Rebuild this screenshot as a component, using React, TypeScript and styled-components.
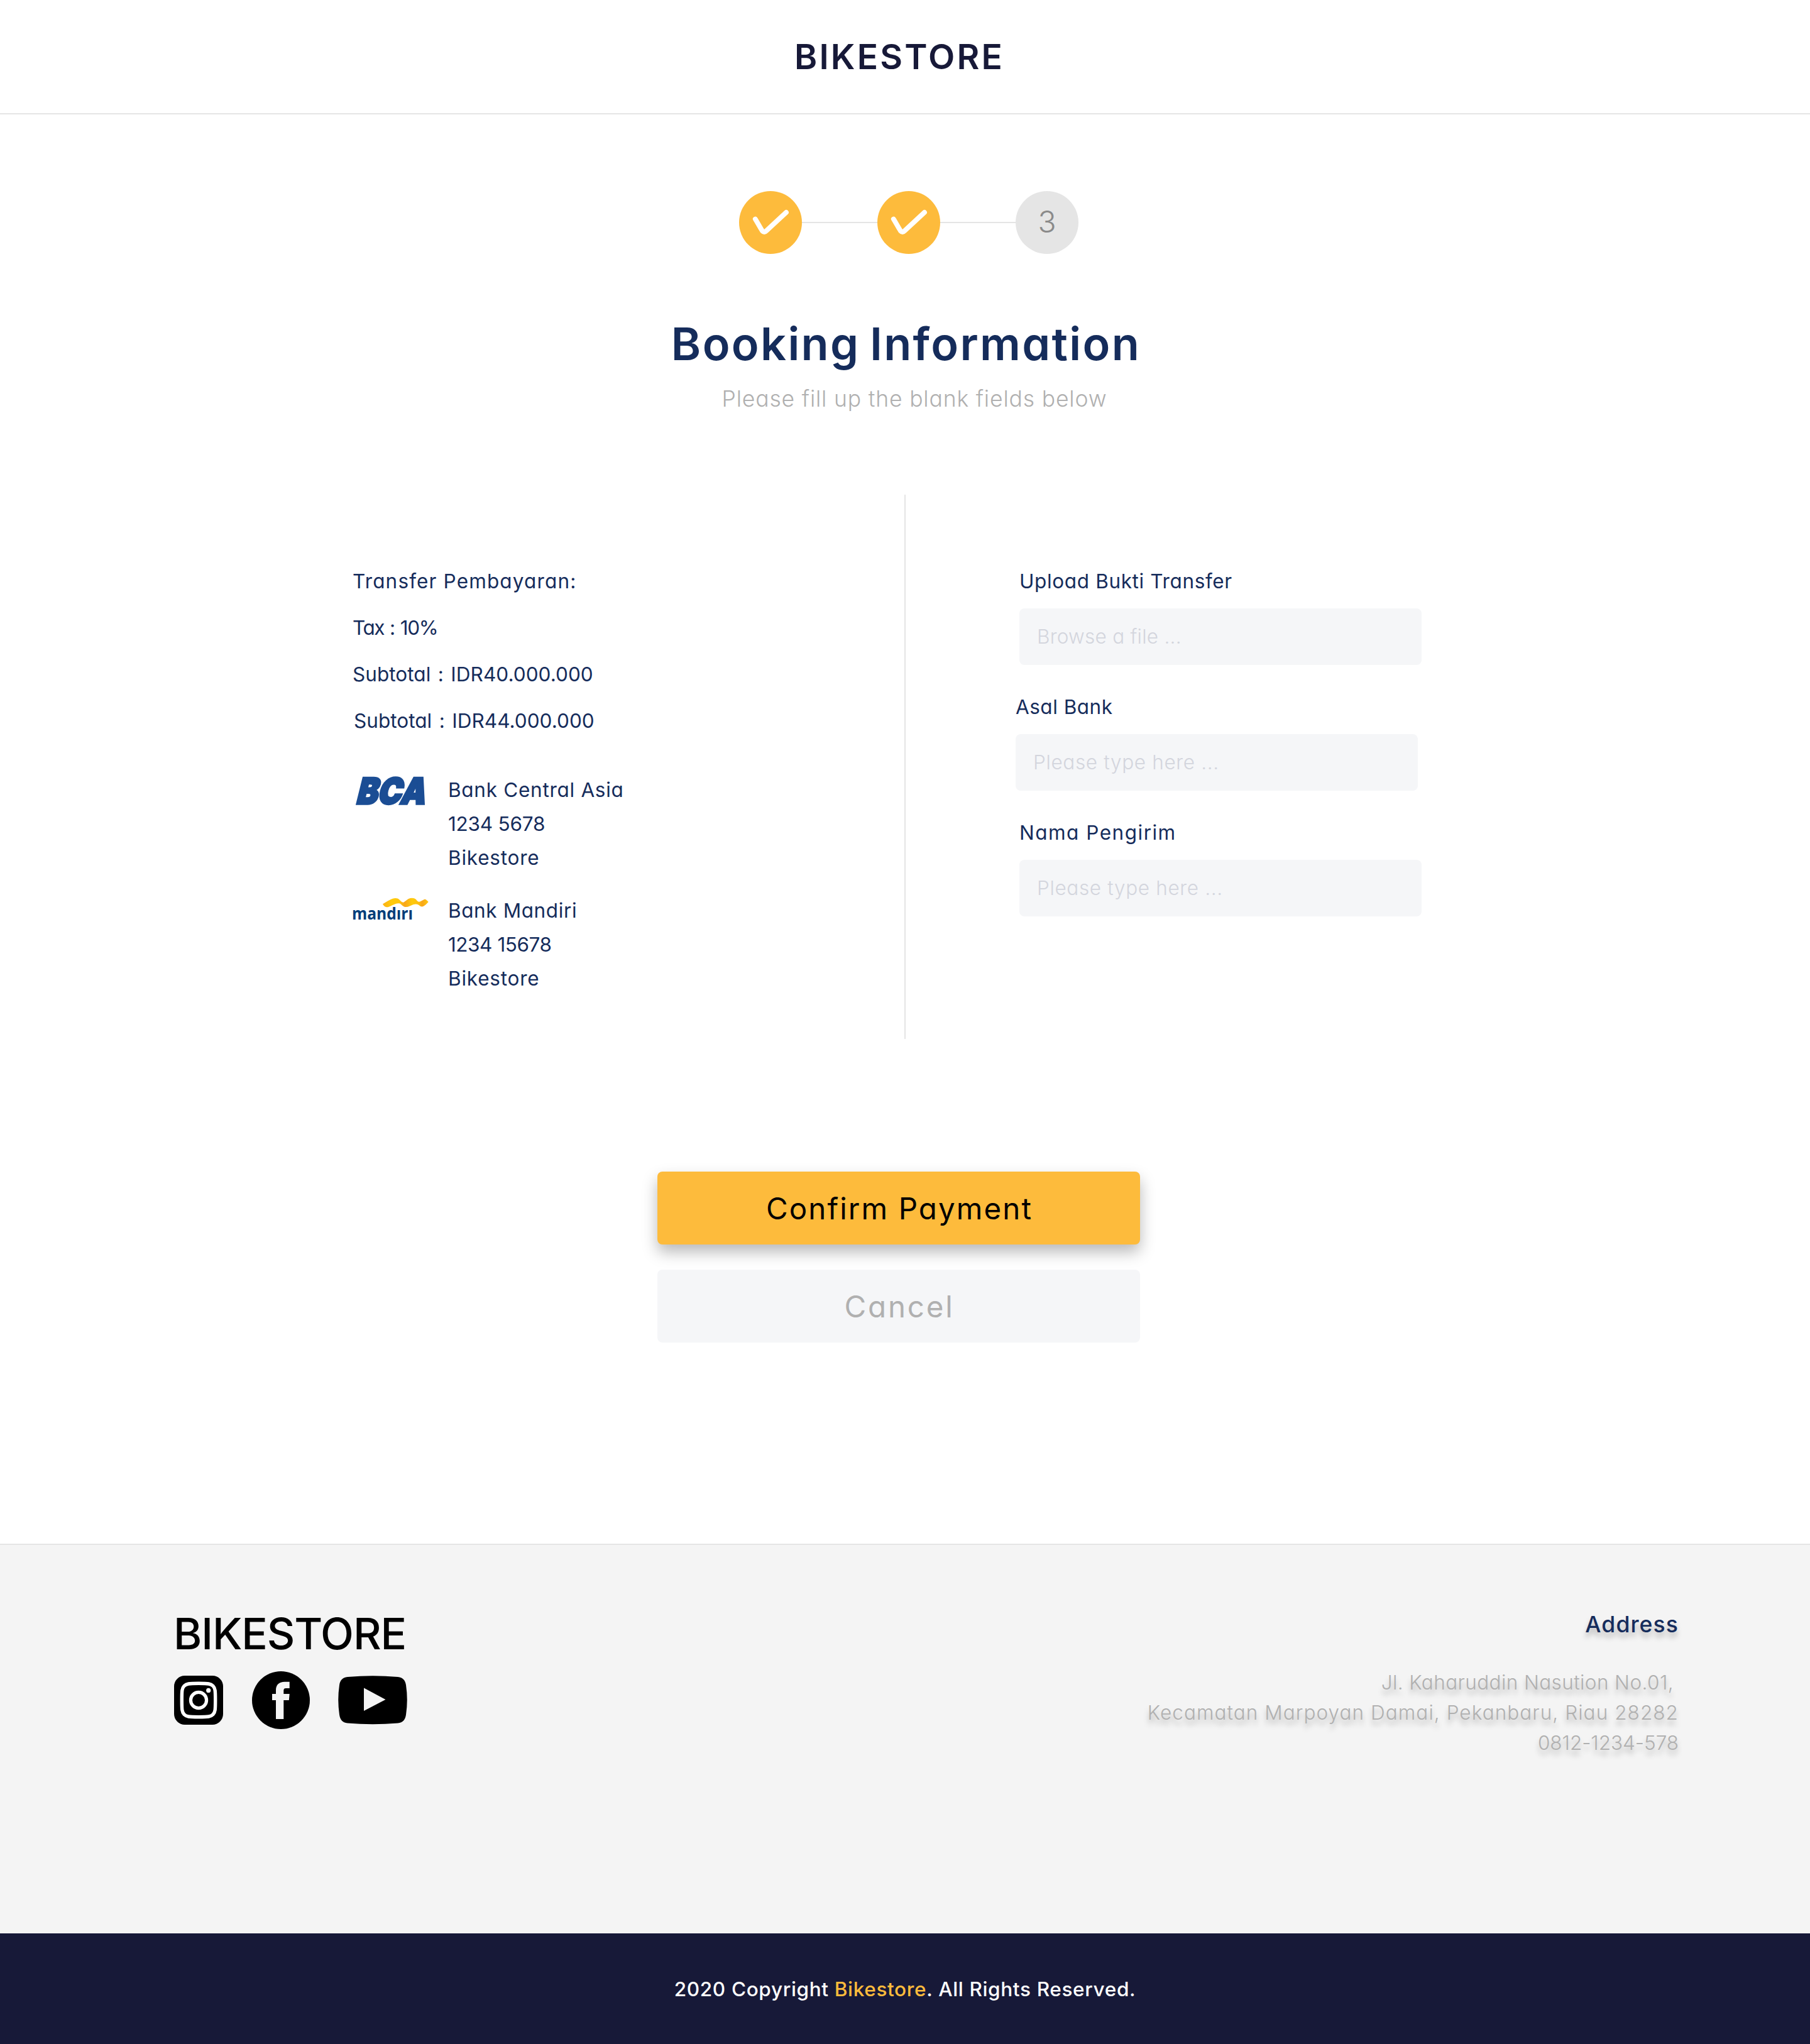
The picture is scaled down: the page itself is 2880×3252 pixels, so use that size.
import React from "react";
import styled, { createGlobalStyle, css } from "styled-components";

const navy = "#152c5b";
const ink = "#171938";
const amber = "#fdbb3c";
const line = "#e5e5e5";
const muted = "#b0b0b0";
const footerGray = "#f4f4f4";

const GlobalStyle = createGlobalStyle`
  *, *::before, *::after { box-sizing: border-box; }
  body {
    margin: 0;
    background: #fff;
    color: ${navy};
    font-family: Inter, "Open Sans", sans-serif;
    font-feature-settings: "cv11" 1;
  }
  h1, h2, h3, p { margin: 0; }
`;

const tracking = css<{ $ls?: number }>`
  letter-spacing: ${(p) => p.$ls ?? 0}px;
`;

const Page = styled.div`
  width: 2880px;
  height: 3252px;
  display: flex;
  flex-direction: column;
  overflow: hidden;
`;

const Header = styled.header`
  height: 182px;
  padding-right: 18px;
  display: flex;
  align-items: center;
  justify-content: center;
  border-bottom: 2px solid ${line};
`;

const Brand = styled.h1`
  font-size: 55px;
  font-weight: 600;
  line-height: 64px;
  letter-spacing: 3.2px;
  color: ${ink};
`;

const Main = styled.main`
  display: flex;
  flex-direction: column;
  align-items: center;
`;

const Stepper = styled.div`
  display: flex;
  align-items: center;
  margin: 122px 0 0 12px;
`;

const Step = styled.div<{ $done?: boolean }>`
  width: 100px;
  height: 100px;
  border-radius: 50%;
  display: flex;
  align-items: center;
  justify-content: center;
  padding-bottom: ${(p) => (p.$done ? 0 : 3)}px;
  background: ${(p) => (p.$done ? amber : line)};
  color: #8a8a8a;
  font-size: 48px;
  font-weight: 300;
`;

const StepLine = styled.div`
  width: 120px;
  height: 2px;
  background: ${line};
`;

const Title = styled.h2`
  margin-top: 100px;
  padding-left: 3px;
  font-size: 72px;
  font-weight: 600;
  line-height: 85px;
  letter-spacing: 2.36px;
  word-spacing: -5px;
`;

const Subtitle = styled.p`
  margin-top: 22px;
  padding-left: 30px;
  font-size: 35.5px;
  font-weight: 300;
  line-height: 48px;
  letter-spacing: 0.83px;
  color: ${muted};
`;

const Columns = styled.section`
  align-self: stretch;
  height: 866px;
  margin-top: 128px;
  display: grid;
  grid-template-columns: 1439px 2px 1fr;
`;

const Divider = styled.div`
  background: ${line};
`;

const Payment = styled.div`
  padding: 101px 0 0 561px;
`;

const Summary = styled.p<{ $ls: number; $ws?: number; $indent?: number }>`
  font-size: 31.5px;
  font-weight: 400;
  line-height: 74px;
  white-space: pre;
  padding-left: ${(p) => p.$indent ?? 0}px;
  word-spacing: ${(p) => p.$ws ?? 0}px;
  ${tracking}
`;

const Banks = styled.div`
  margin-top: 46px;
  display: flex;
  flex-direction: column;
  gap: 30px;
`;

const Bank = styled.div`
  display: grid;
  grid-template-columns: 152px 1fr;
  align-items: start;
`;

const BankLogo = styled.svg`
  display: block;
  margin: 5px 0 0 1px;
  overflow: visible;
`;

const BankLine = styled.p<{ $ls: number }>`
  font-size: 31.5px;
  font-weight: 400;
  line-height: 54px;
  ${tracking}
`;

const Form = styled.form`
  padding: 114px 0 0 181px;
  display: flex;
  flex-direction: column;
  gap: 43px;
`;

const Field = styled.label<{ $shift?: number }>`
  width: 640px;
  display: flex;
  flex-direction: column;
  gap: 19px;
  margin-left: ${(p) => p.$shift ?? 0}px;
`;

const Label = styled.span<{ $ls: number }>`
  font-size: 31.5px;
  font-weight: 400;
  line-height: 48px;
  ${tracking}
`;

const Input = styled.input<{ $ls: number }>`
  width: 640px;
  height: 90px;
  border: 0;
  border-radius: 8px;
  padding: 0 28px 2px;
  background: #f5f6f8;
  font-family: inherit;
  font-feature-settings: inherit;
  font-size: 31.5px;
  font-weight: 300;
  color: ${navy};
  ${tracking}
  &::placeholder {
    color: #d3d5dd;
    opacity: 1;
  }
`;

const Actions = styled.div`
  margin: 211px 20px 0 0;
  display: flex;
  flex-direction: column;
  gap: 40px;
`;

const Button = styled.button<{ $primary?: boolean; $ls: number }>`
  width: 768px;
  height: 116px;
  border: 0;
  border-radius: 8px;
  padding: 1px 0 0 2px;
  font-family: inherit;
  font-feature-settings: inherit;
  font-size: 47.5px;
  font-weight: 400;
  color: ${(p) => (p.$primary ? "#000" : muted)};
  background: ${(p) => (p.$primary ? amber : "#f5f6f8")};
  box-shadow: ${(p) => (p.$primary ? "0 12px 24px rgba(0, 0, 0, 0.28)" : "none")};
  ${tracking}
`;

const Footer = styled.footer`
  height: 620px;
  margin-top: 320px;
  padding: 101px 209px 0 277px;
  display: flex;
  justify-content: space-between;
  align-items: flex-start;
  background: ${footerGray};
  border-top: 2px solid ${line};
`;

const FooterBrand = styled.h2`
  margin-left: -1px;
  font-size: 69px;
  font-weight: 500;
  line-height: 80px;
  letter-spacing: -1.1px;
  color: #000;
`;

const Socials = styled.div`
  margin-top: 20px;
  height: 92px;
  display: flex;
  align-items: center;
  gap: 45.5px;
  svg { display: block; }
`;

const Contact = styled.address`
  display: flex;
  flex-direction: column;
  align-items: flex-end;
  padding-top: 2px;
  font-style: normal;
  text-shadow: 0 8px 8px rgba(0, 0, 0, 0.25);
`;

const ContactTitle = styled.h3`
  margin-bottom: 44px;
  font-size: 35.5px;
  font-weight: 500;
  line-height: 48px;
  letter-spacing: 1.1px;
`;

const ContactLine = styled.p<{ $ls: number; $end?: number }>`
  font-size: 31.5px;
  font-weight: 300;
  line-height: 48px;
  color: ${muted};
  white-space: nowrap;
  margin-right: ${(p) => p.$end ?? 0}px;
  ${tracking}
`;

const Copyright = styled.div`
  height: 176px;
  display: flex;
  align-items: center;
  justify-content: center;
  background: ${ink};
  color: #fff;
  font-size: 31.5px;
  font-weight: 500;
  letter-spacing: 0.66px;
`;

const Accent = styled.span`
  color: ${amber};
`;

const Check = () => (
  <svg width="100" height="100" viewBox="0 0 100 100" fill="none">
    <path
      d="M25.8 44.5C31 53 34.5 60 37 63.5C38.8 65.6 41.4 65.4 43.2 63.4L75 33.8"
      stroke="#fff"
      strokeWidth="7.8"
      strokeLinecap="round"
      strokeLinejoin="round"
    />
  </svg>
);

const BcaLogo = () => (
  <BankLogo width="120" height="48" viewBox="0 0 120 48">
    <g transform="translate(3.5 43.5) skewX(-14)">
      <text
        x="0"
        y="0"
        fontFamily="Inter, sans-serif"
        fontWeight="900"
        fontSize="57"
        textLength="110"
        lengthAdjust="spacingAndGlyphs"
        fill="#1b4d94"
        stroke="#1b4d94"
        strokeWidth="3.5"
      >
        BCA
      </text>
    </g>
  </BankLogo>
);

const MandiriLogo = () => (
  <BankLogo width="122" height="38" viewBox="0 -1 122 38">
    <defs>
      <linearGradient id="ribbon" x1="47" x2="120" y1="0" y2="0" gradientUnits="userSpaceOnUse">
        <stop offset="0" stopColor="#fbb016" />
        <stop offset="0.2" stopColor="#ffcb0c" />
        <stop offset="0.36" stopColor="#ffc60e" />
        <stop offset="0.48" stopColor="#f8a51b" />
        <stop offset="0.64" stopColor="#ffcb0c" />
        <stop offset="0.8" stopColor="#fdbc12" />
        <stop offset="0.86" stopColor="#f8a51b" />
        <stop offset="1" stopColor="#ffcb0c" />
      </linearGradient>
    </defs>
    <text
      x="-2"
      y="35"
      fontFamily="Open Sans, Noto Sans, sans-serif"
      fontWeight="700"
      fontSize="27.500"
      textLength="97"
      lengthAdjust="spacingAndGlyphs"
      fill="#003d79"
    >
      mandırı
    </text>
    <path
      d="M47 10.3C52 7 57 4 62 2C67 0.2 71 0.8 73.3 3.3C75.5 5.5 77 7.7 80 7.7C83 6 85.5 3.5 88 2C92 0 97 0.2 99.7 2.7C101.5 4.5 102.5 6.7 105.3 6.7C108 6 110.5 4 113 3C115.5 2.2 117 4.5 119.7 7C117 10 114.5 12.3 112 13.7C109.5 15 107.5 14.5 105.5 12.7C102.5 10 99.5 10 96 11C91.5 12.7 87.5 15.5 83 15C78.5 14.5 76.5 9.7 73 9.2C66 8.5 58.5 15.5 53 15.3C50.5 15 48.5 13 47 10.3Z"
      fill="url(#ribbon)"
    />
  </BankLogo>
);

const Instagram = () => (
  <svg width="78" height="78" viewBox="0 0 78 78" fill="none">
    <rect width="78" height="78" rx="17" fill="#000" />
    <path
      d="M39 12.3C55 12.3 58.5 12.8 62 16.4C65.5 20 65.7 24 65.7 39C65.7 54 65.5 58 62 61.6C58.5 65.2 55 65.7 39 65.7C23 65.7 19.5 65.2 16 61.6C12.5 58 12.3 54 12.3 39C12.3 24 12.5 20 16 16.4C19.5 12.8 23 12.3 39 12.3Z"
      stroke="#fff"
      strokeWidth="5.4"
    />
    <circle cx="39" cy="39" r="12.6" stroke="#fff" strokeWidth="5.2" />
    <circle cx="54.7" cy="23.4" r="3.6" fill="#fff" />
  </svg>
);

const Facebook = () => (
  <svg width="92" height="92" viewBox="0 0 92 92">
    <circle cx="46" cy="46" r="46" fill="#000" />
    <path
      d="M38 76V46H32V36H38V30C38 21.5 43 16.7 52 16.7H59.7V27H54C51.5 27 50.3 28 50.3 30.5V36H59.7L58.8 46H50.3V76Z"
      fill={footerGray}
    />
  </svg>
);

const Youtube = () => (
  <svg width="110" height="78" viewBox="0 0 110 78">
    <path
      d="M15 2Q55 -1.5 95 2C103 2.8 107 7.5 108 15Q111.5 38.5 108 62C107 70 103 74.7 95 75.5Q55 79 15 75.5C7 74.7 3 70 2 62Q-1.5 38.5 2 15C3 7.5 7 2.8 15 2Z"
      fill="#000"
    />
    <path d="M41 19.5L75.5 38L41 56Z" fill={footerGray} />
  </svg>
);

export default function App() {
  return (
    <Page>
      <GlobalStyle />
      <Header>
        <Brand>BIKESTORE</Brand>
      </Header>
      <Main>
        <Stepper>
          <Step $done><Check /></Step>
          <StepLine />
          <Step $done><Check /></Step>
          <StepLine />
          <Step>3</Step>
        </Stepper>
        <Title>Booking Information</Title>
        <Subtitle>Please fill up the blank fields below</Subtitle>
        <Columns>
          <Payment>
            <Summary $ls={1.15}>Transfer Pembayaran:</Summary>
            <Summary $ls={-1.4} $ws={1.5}>Tax : 10%</Summary>
            <Summary $ls={0.05} $ws={2.5}>Subtotal : IDR40.000.000</Summary>
            <Summary $ls={0.04} $ws={2.5} $indent={2}>Subtotal : IDR44.000.000</Summary>
            <Banks>
              <Bank>
                <BcaLogo />
                <div>
                  <BankLine $ls={0.72}>Bank Central Asia</BankLine>
                  <BankLine $ls={-0.23}>1234 5678</BankLine>
                  <BankLine $ls={0.78}>Bikestore</BankLine>
                </div>
              </Bank>
              <Bank>
                <MandiriLogo />
                <div>
                  <BankLine $ls={0.6}>Bank Mandiri</BankLine>
                  <BankLine $ls={-0.46}>1234 15678</BankLine>
                  <BankLine $ls={0.78}>Bikestore</BankLine>
                </div>
              </Bank>
            </Banks>
          </Payment>
          <Divider />
          <Form>
            <Field>
              <Label $ls={0.64}>Upload Bukti Transfer</Label>
              <Input $ls={0.25} placeholder="Browse a file ..." />
            </Field>
            <Field $shift={-6}>
              <Label $ls={0.5}>Asal Bank</Label>
              <Input $ls={0.65} placeholder="Please type here ..." />
            </Field>
            <Field>
              <Label $ls={1.5}>Nama Pengirim</Label>
              <Input $ls={0.65} placeholder="Please type here ..." />
            </Field>
          </Form>
        </Columns>
        <Actions>
          <Button $primary $ls={2.1}>Confirm Payment</Button>
          <Button $ls={2.8}>Cancel</Button>
        </Actions>
      </Main>
      <Footer>
        <div>
          <FooterBrand>BIKESTORE</FooterBrand>
          <Socials>
            <Instagram />
            <Facebook />
            <Youtube />
          </Socials>
        </div>
        <Contact>
          <ContactTitle>Address</ContactTitle>
          <ContactLine $ls={0.41} $end={8}>Jl. Kaharuddin Nasution No.01,</ContactLine>
          <ContactLine $ls={1.06}>Kecamatan Marpoyan Damai, Pekanbaru, Riau 28282</ContactLine>
          <ContactLine $ls={-0.05}>0812-1234-578</ContactLine>
        </Contact>
      </Footer>
      <Copyright>
        <p>2020 Copyright <Accent>Bikestore</Accent>. All Rights Reserved.</p>
      </Copyright>
    </Page>
  );
}
